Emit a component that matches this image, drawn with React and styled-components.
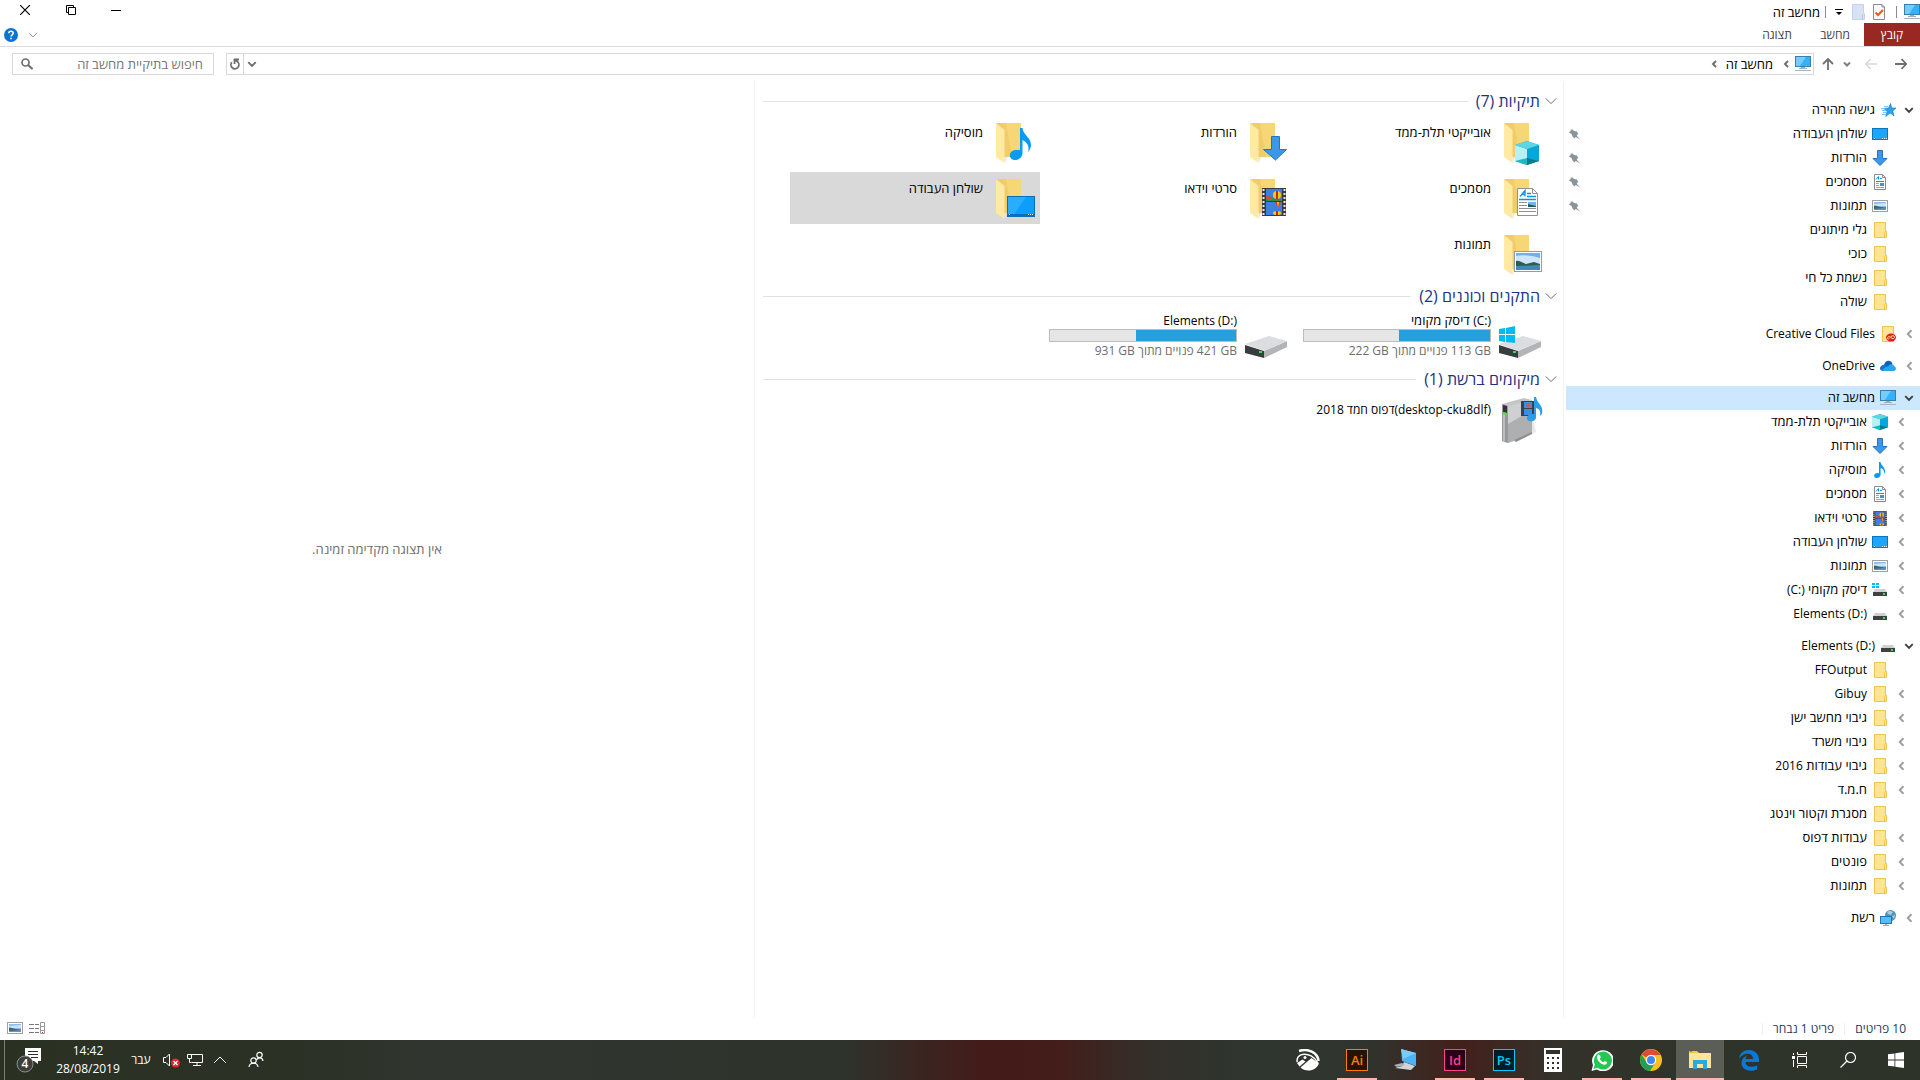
import React from 'react'
import styled, { createGlobalStyle } from 'styled-components'


const GlobalStyle = createGlobalStyle`
  * { box-sizing: border-box; }
  body {
    margin: 0;
    background: #fff;
    color: #000;
    font-family: "Open Sans", "Noto Sans", "DejaVu Sans", sans-serif;
    font-size: 13px;
    line-height: 16px;
  }
  button, input { font: inherit; color: inherit; }
  svg { display: block; flex: none; }
`

const Window = styled.div`
  display: flex;
  flex-direction: column;
  min-height: 100vh;
`

/* latin runs sit one size below the hebrew text */
const Latin = styled.bdi.attrs({ dir: 'ltr' })`
  font-size: 12px;
`

const IconButton = styled.button`
  display: flex;
  align-items: center;
  justify-content: center;
  width: ${p => p.$w || 16}px;
  height: ${p => p.$h || 20}px;
  padding: 0;
  border: 0;
  background: none;
`

/* ---------- title bar ---------- */

const TitleBar = styled.header`
  display: flex;
  justify-content: space-between;
  height: 23px;
`

const QuickTools = styled.div`
  display: flex;
  align-items: center;
  height: 23px;
`

const Divider = styled.span`
  width: 1px;
  height: 12px;
  margin: 0 ${p => p.$gap || 7}px;
  background: ${p => p.$color || '#8c8c8c'};
`

const WindowTitle = styled.h1`
  margin: 0;
  font-size: 13px;
  line-height: 16px;
  font-weight: 400;
`

const WindowButtons = styled.div`
  display: flex;
  direction: ltr;
  padding-left: 2px;
`

const Ribbon = styled.nav`
  display: flex;
  align-items: center;
  height: 24px;
  border-bottom: 1px solid #dadbdc;
`

const Tab = styled.button`
  width: ${p => p.$file ? 56 : 58}px;
  height: 23px;
  padding: 0;
  border: 0;
  background: ${p => p.$file ? '#982821' : 'none'};
  color: ${p => p.$file ? '#fff' : '#444'};
  font-size: 12px;
`

const RibbonEnd = styled.div`
  display: flex;
  direction: ltr;
  align-items: center;
  gap: 6px;
  margin-right: auto;
  padding-left: 3px;
`

/* ---------- address row ---------- */

const AddressRow = styled.div`
  display: flex;
  align-items: center;
  height: 35px;
  padding: 0 8px 1px 12px;
`

const Arrows = styled.div`
  display: flex;
  align-items: center;
`

const AddressBox = styled.div`
  display: flex;
  flex: 1;
  align-items: center;
  height: 22px;
  border: 1px solid #d9d9d9;
  padding-right: 2px;
`

const Crumb = styled.button`
  padding: 0 4px;
  border: 0;
  background: none;
`

const AddressTools = styled.div`
  display: flex;
  direction: ltr;
  align-items: center;
  height: 20px;
  margin-right: auto;
`

const RefreshButton = styled(IconButton)`
  border-right: 1px solid #d9d9d9;
`

const SearchBox = styled.label`
  display: flex;
  align-items: center;
  width: 202px;
  height: 22px;
  margin-right: 12px;
  padding: 0 10px 0 8px;
  border: 1px solid #d9d9d9;
`

const SearchInput = styled.input`
  flex: 1;
  min-width: 0;
  padding: 0;
  border: 0;
  outline: 0;
  background: none;
  &::placeholder { color: #767676; opacity: 1; }
`

/* ---------- panes ---------- */

const Panes = styled.div`
  display: grid;
  flex: 1;
  grid-template-columns: 357px 809fr 754fr;
`

const NavPane = styled.nav`
  padding: 16px 0 16px 2px;
  border-left: 1px solid #f3f3f3;
`

const NavGroup = styled.div`
  margin-bottom: 8px;
`

const NavRow = styled.div`
  display: flex;
  align-items: center;
  height: 24px;
  padding-right: ${p => p.$top ? 3 : 11}px;
  padding-left: 3px;
  background: ${p => p.$selected ? '#cce8ff' : 'none'};
`

const NavLink = styled.a`
  display: flex;
  flex: 1;
  align-items: center;
  gap: 5px;
  margin-right: 5px;
  color: #000;
  text-decoration: none;
`

const NavName = styled.span`
  padding-bottom: 2px;
`

const ChevronSlot = styled.span`
  width: 16px;
`

const FilesPane = styled.main`
  padding: 3px 4px 16px 8px;
  border-left: 1px solid #f3f3f3;
`

const GroupHeader = styled.h2`
  display: flex;
  align-items: center;
  gap: 4px;
  height: 24px;
  margin: 4px 0 3px;
  padding-right: 1px;
  color: #1e3287;
  font-size: 16px;
  line-height: 20px;
  font-weight: 400;
  white-space: nowrap;
  &::after {
    content: '';
    flex: 1;
    height: 1px;
    margin-right: 4px;
    background: #e2e2e2;
  }
`

const TileGrid = styled.div`
  display: grid;
  grid-template-columns: repeat(auto-fill, 250px);
  gap: 4px;
  padding-right: 11px;
`

const Tile = styled.button`
  display: flex;
  gap: 5px;
  height: 52px;
  padding: 2px 4px;
  border: 0;
  background: ${p => p.$selected ? '#d9d9d9' : 'none'};
  text-align: right;
`

const TileName = styled.span`
  padding-top: 6px;
  font-size: ${p => p.$small ? 12 : 13}px;
`

const DriveInfo = styled.span`
  width: 188px;
`

const DriveName = styled.span`
  display: block;
  height: 16px;
  line-height: 14px;
  direction: ltr;
  text-align: right;
`

const DriveBar = styled.span`
  display: block;
  height: 13px;
  border: 1px solid #bcbcbc;
  background: #e6e6e6;
`

const DriveFill = styled.span`
  display: block;
  height: 100%;
  background: #26a0da;
`

const DriveSpace = styled.span`
  display: block;
  font-size: 12px;
  line-height: 18px;
  color: #6d6d6d;
`

const PreviewPane = styled.aside`
  display: flex;
  align-items: center;
  justify-content: center;
  padding-bottom: 2px;
  color: #6d6d6d;
`

/* ---------- status bar and task bar ---------- */

const StatusBar = styled.footer`
  display: flex;
  align-items: center;
  height: 22px;
  padding: 0 14px 0 8px;
  color: #1e395b;
  font-size: 12px;
`

const ViewButtons = styled.div`
  display: flex;
  direction: ltr;
  gap: 6px;
  margin-right: auto;
  padding-bottom: 2px;
`

const TaskBar = styled.footer`
  display: flex;
  justify-content: space-between;
  height: 40px;
  background: linear-gradient(90deg, #2a3022 0%, #2b3124 15%, #30352f 22%, #2e332c 44%, #3a2520 48%, #431c1a 51%, #431d1a 55%, #33302a 60%, #2f352f 65%, #30342e 71%, #43201b 76%, #33322b 81%, #2f342b 88%, #2e332a 100%);
  color: #fff;
  font-size: 12px;
`

const Apps = styled.div`
  display: flex;
  gap: 1px;
`

const SystemApps = styled.div`
  display: flex;
  margin-left: 2px;
`

const App48 = styled.button`
  display: flex;
  align-items: center;
  justify-content: center;
  width: 48px;
  height: 40px;
  padding: 0;
  border: 0;
  background: ${p => p.$active ? '#5b5e57' : 'none'};
  background-image: ${p => p.$open ? 'linear-gradient(#fcb6aa, #fcb6aa)' : 'none'};
  background-repeat: no-repeat;
  background-position: center bottom;
  background-size: ${p => p.$active ? 48 : 40}px 2px;
`

const AdobeTile = styled.span`
  display: flex;
  align-items: center;
  justify-content: center;
  width: 22px;
  height: 22px;
  border: 1px solid ${p => p.$color};
  background: ${p => p.$bg};
  color: ${p => p.$color};
  font-size: 13px;
  font-weight: 600;
  line-height: 20px;
`

const Tray = styled.div`
  display: flex;
  direction: ltr;
  align-items: center;
  padding-left: 4px;
`

const Clock = styled.time`
  width: 72px;
  line-height: 18px;
  text-align: center;
`

const Lang = styled.button`
  width: 34px;
  padding: 0;
  border: 0;
  background: none;
  text-align: center;
`

const NoticeButton = styled(IconButton)`
  border-left: 1px solid #7a7d76;
`

/* ---------- icons ---------- */

function Chevron({ dir = 'left', color = '#a0a0a0', size = 8, weight = 2 }) {
  const d = {
    left: 'M6 1 L3 4 L6 7',
    down: 'M1 2.5 L4 5.5 L7 2.5',
    up: 'M1 5.5 L4 2.5 L7 5.5',
  }[dir]
  return (
    <svg width={size} height={size} viewBox="0 0 8 8" fill="none" stroke={color} strokeWidth={weight * 8 / size}>
      <path d={d} />
    </svg>
  )
}

function Monitor() {
  return (
    <svg width="16" height="16" viewBox="0 0 16 16">
      <rect x="0.5" y="0.5" width="15" height="10" fill="#35b1fb" stroke="#3b7ea8" />
      <path d="M1 1H11L5 10H1Z" fill="#74ccff" />
      <path d="M6 11h4v1H6zM4 12h8v1H4z" fill="#9bb0bd" />
      <path d="M0 14h16v1H0z" fill="#a9b3bb" />
    </svg>
  )
}

function SmallFolder() {
  return (
    <svg width="16" height="16" viewBox="0 0 16 16">
      <path d="M2.5 0.5H13.5V9.5H14.5V15.5H2.5Z" fill="#ffe594" stroke="#ecc54c" />
      <path d="M12.5 15.5V10.5L13.5 9.5" fill="none" stroke="#ecc54c" />
    </svg>
  )
}

function Star() {
  return (
    <svg width="16" height="16" viewBox="0 0 16 16">
      <path d="M10.500 1.500L11.800 6L16 6L12.800 9L14 14L10.200 11L5.800 14.500L7.200 9.500L4 6.400L8.500 6Z" fill="#29a3f0" stroke="#1279c4" strokeWidth=".6" />
      <path d="M4 4.500h4M1 6.500h5M2 8.500h4M3 10.500h4M2 12.500h4" stroke="#5cb9f2" strokeWidth=".8" />
    </svg>
  )
}

function SmallDesktop() {
  return (
    <svg width="16" height="16" viewBox="0 0 16 16">
      <rect x="0.5" y="2.5" width="15" height="11" fill="#1ea5fc" stroke="#0b74bd" />
      <path d="M2 12h1v1H2zM10 12h1v1h-1zM12 12h1v1h-1zM14 12h1v1h-1z" fill="#fff" />
    </svg>
  )
}

function SmallDownload() {
  return (
    <svg width="16" height="16" viewBox="0 0 16 16">
      <path d="M5.5 0.5H10.5V8.5H15L8 15.5L1 8.5H5.5Z" fill="#3b98e8" stroke="#2475c0" />
    </svg>
  )
}

function SmallDocument() {
  return (
    <svg width="16" height="16" viewBox="0 0 16 16">
      <path d="M2.5 0.5H10.5L13.5 3.5V15.5H2.5Z" fill="#fff" stroke="#8b8b8b" />
      <path d="M10.5 0.5V3.5H13.5" fill="none" stroke="#8b8b8b" />
      <path d="M4 5.500L6.500 2.500V5.500M8 4.500H10M4 7.500H12" stroke="#1b8fd8" fill="none" />
      <path d="M4 9.500H7M4 11.500H7M4 13.500H12" stroke="#a0a0a0" />
      <path d="M8 9h4v3H8z" fill="#4a93b5" />
    </svg>
  )
}

function SmallPicture({ size = 16 }) {
  return (
    <svg width={size} height={size} viewBox="0 0 16 16">
      <rect x="0.5" y="2.5" width="15" height="11" fill="#fff" stroke="#a0a0a0" />
      <path d="M2 4H14V12H2Z" fill="#8dbdf3" />
      <path d="M2 6L14 5V8H2Z" fill="#cfe3f7" />
      <path d="M2 7.500C5 7.500 7 9 9 9L14 9.500V11H2Z" fill="#3c6a6c" />
      <path d="M2 11L14 10V12H2Z" fill="#5d98bd" />
    </svg>
  )
}

function CloudFiles() {
  return (
    <svg width="16" height="16" viewBox="0 0 16 16">
      <path d="M2.500 0.500H13.500V15.500H2.500Z" fill="#ffe594" stroke="#ecc54c" />
      <ellipse cx="11" cy="11.500" rx="5" ry="4" fill="#e2231a" />
      <path d="M7.500 12.500C7.500 10 10 10 11 11.500S14 13 14.500 11.500S12.500 9 11 10.500S8.500 14 7.500 12.500Z" fill="none" stroke="#ffd9a0" />
    </svg>
  )
}

function OneDrive() {
  return (
    <svg width="16" height="16" viewBox="0 0 16 16">
      <path d="M4 7C5 2 11 1 12.500 6L8 10L1 12C-1 10 1 7 4 7Z" fill="#0a63b8" />
      <path d="M3 7C6 6 7 8 10 10L3 13C0 13 -1 9 3 7Z" fill="#1277cf" />
      <path d="M3 13C3 10 6 9 8 8.500C10 5 14 6 14 8C17 9 16 13 14 13Z" fill="#28a8ea" />
    </svg>
  )
}

function Cube({ size = 16 }) {
  return (
    <svg width={size} height={size} viewBox="0 0 24 24">
      <path d="M12 0L24 4V20L12 24L0 20V4Z" fill="#0fa8c4" />
      <path d="M0 4L12 8V20L0 20Z" fill="#b8f1f4" />
      <path d="M12 8L24 4V20L12 17Z" fill="#06a7dc" />
      <path d="M12 0L24 4L12 8L0 4Z" fill="#5ed6e2" />
      <path d="M0 20L12 17V24Z" fill="#1bb9c6" />
      <path d="M12 17L24 20L12 24Z" fill="#087b8d" />
    </svg>
  )
}

function Note({ size = 16 }) {
  return (
    <svg width={size} height={size} viewBox="0 0 16 16">
      <path d="M7 0H8.500C9 4 13.500 5 13 10L12 12C12.500 8.500 11 7 8.600 6V12.500C8.600 15 6.500 16 4.500 16C1 16 1.500 11 5.500 11L7 11.200Z" fill="#089bf4" />
    </svg>
  )
}

function Film({ size = 16 }) {
  return (
    <svg width={size} height={size} viewBox="0 0 24 28" preserveAspectRatio="none">
      <path d="M0 0H24V28H0Z" fill="#3b3b3b" />
      <path d="M1.500 1V28M22.500 1V28" stroke="#e8e8e8" strokeWidth="2" strokeDasharray="2 2" />
      <path d="M4 1H20V13H4ZM4 14H20V27H4Z" fill="#3f7fdf" />
      <path d="M4 9Q8 7 12 11H20V13H4Z" fill="#2f9140" />
      <path d="M4 8L9 9L11 12L5 12Z" fill="#e5404a" />
      <ellipse cx="15" cy="7" rx="4" ry="4" fill="#f7c51e" />
      <path d="M14 3h2v8h-2z" fill="#c62828" />
      <path d="M13 14H19L16 20Z" fill="#d23b2a" />
      <path d="M15 14H17L16 20Z" fill="#f7c51e" />
      <ellipse cx="15" cy="25" rx="4" ry="2" fill="#f7c51e" />
      <path d="M14 23h2v4h-2z" fill="#c62828" />
    </svg>
  )
}

function SmallDrive({ system }) {
  return (
    <svg width="16" height="16" viewBox="0 0 16 16">
      {system && <path d="M0 1h3v2H0zM4 1h3v2H4zM0 4h3v2H0zM4 4h3v2H4z" fill="#00bcf2" />}
      <path d="M3 7H13L15 10H1Z" fill="#cfd1d4" />
      <path d="M1 10H15V14H1Z" fill="#3f4245" />
      <path d="M11 11h2v2h-2z" fill="#3ddc4a" />
    </svg>
  )
}

function NetworkGlobe() {
  return (
    <svg width="16" height="16" viewBox="0 0 16 16">
      <circle cx="10.500" cy="5.500" r="5.500" fill="#4f93b5" />
      <path d="M7 2Q10 0 13 2L11 5L8 4ZM12 6L15 5L14 9Z" fill="#a5cfe0" />
      <rect x="0.500" y="6.500" width="11" height="7" fill="#53bdfc" stroke="#2277ae" />
      <path d="M5 14h2v1h2v1H3v-1h2z" fill="#9cabb5" />
    </svg>
  )
}

function Pin() {
  return (
    <svg width="11" height="11" viewBox="0 0 11 11">
      <path d="M3 0L5 2L8 2.500L9 4.500L7.800 6.800L11 10.500L6.800 8L5.500 9.500L3.500 7.500L2.500 5L0 3.500Z" fill="#8a949b" />
    </svg>
  )
}

function FolderShape() {
  return (
    <>
      <path d="M8 5H33V39H16Z" fill="#f0cd6a" />
      <path d="M18 5H33V39H24Z" fill="#fadb7b" opacity=".7" />
      <path d="M8 5L16.500 12V45L8 39Z" fill="#ffe9a3" />
      <path d="M16.500 39H19L17 45Z" fill="#e5e5e5" />
    </>
  )
}

function BigFolder({ kind }) {
  return (
    <svg width="48" height="48" viewBox="0 0 48 48">
      <FolderShape />
      {kind === 'cube' && <g transform="translate(19 23)"><Cube size={24} /></g>}
      {kind === 'download' && (
        <path d="M29.500 18.500H37.500V31.500H44.500L33.500 42L21.500 31.500H29.500Z" fill="#3b98e8" stroke="#2475c0" />
      )}
      {kind === 'music' && (
        <path d="M32 10H34.500C35 17 43 19 43 27C43 30 41 33 40 34C42 27 38 24 34.500 22V35C34.500 39 31 42 27 42C20 42 20 32 28 32H32Z" fill="#089bf4" />
      )}
      {kind === 'document' && (
        <g fill="none">
          <path d="M21.500 14.500H36.500L41.500 19.500V41.500H21.500Z" fill="#fff" stroke="#909090" />
          <path d="M36.500 14.500V19.500H41.500" stroke="#909090" />
          <path d="M24 22.500L29 16.500V22.500M25 20.500H29M31 19.500H35M31 22.500H40M23 25.500H40" stroke="#1490d8" strokeWidth="1.300" />
          <path d="M23 28.500H31M23 31.500H31M23 34.500H40M23 37.500H40" stroke="#909090" />
          <path d="M32 28h8v5h-8z" fill="#71b7e8" />
          <path d="M32 30l8 2v1h-8z" fill="#225c5f" />
        </g>
      )}
      {kind === 'video' && (
        <svg x="20" y="14" width="24" height="28"><Film size="100%" /></svg>
      )}
      {kind === 'desktop' && (
        <g>
          <rect x="19.500" y="22.500" width="27" height="20" fill="#0d9dfb" stroke="#0870b8" />
          <path d="M20 23H38L25 42H20Z" fill="#2badff" />
          <path d="M20 40h26v2H20z" fill="#0870b8" />
          <path d="M21 40h1v1h-1zM40 40h1v1h-1zM42 40h1v1h-1zM44 40h1v1h-1z" fill="#fff" />
        </g>
      )}
      {kind === 'picture' && (
        <g>
          <rect x="18.500" y="21.500" width="27" height="20" fill="#fff" stroke="#9a9a9a" />
          <path d="M20 23h24v17H20z" fill="#6fb0f2" />
          <path d="M20 26Q28 24 44 28V34H20Z" fill="#cfe6fa" />
          <path d="M20 31C24 30 26 33 30 34L38 32L44 34V36H20Z" fill="#2e5d4c" />
          <path d="M20 36L44 35V40H20Z" fill="#3f88b8" />
        </g>
      )}
    </svg>
  )
}

function BigDrive({ system }) {
  return (
    <svg width="48" height="48" viewBox="0 0 48 48">
      <path d="M3 32L22 38V45L3 40Z" fill="#393c3e" />
      <path d="M22 38L45 28V34L22 45Z" fill="#b3b4b8" />
      <path d="M3 31L27 23L45 28L22 38Z" fill="#dcdde0" />
      <path d="M17 38h3v2h-3z" fill="#37e04a" />
      {system && <path d="M3 16L9 15V21H3ZM10 15L19 13V21H10ZM3 22H9V29L3 28ZM10 22H19V30L10 29Z" fill="#00bcf2" />}
    </svg>
  )
}

function MediaServer() {
  return (
    <svg width="48" height="48" viewBox="0 0 48 48">
      <path d="M36 20L40 36L18 46H10Z" fill="#e8e8e8" />
      <path d="M6 8L28 2L36 4V37L12 47L6 45Z" fill="#c4c5c6" />
      <path d="M12 10L36 4V37L12 47Z" fill="#cfd0d1" />
      <path d="M12 28L36 14V37L12 47Z" fill="#aeafb0" />
      <path d="M6 8L12 10V47L6 45Z" fill="#97999b" />
      <path d="M8 10V45" stroke="#e2e2e2" />
      <path d="M7 9L11 10V17L7 16Z" fill="#333" />
      <path d="M7 16L11 17V19L7 18Z" fill="#58df2c" />
      <path d="M18 44L36 36V38L20 46Z" fill="#8d8e8f" />
      <path d="M25 5H38V20H25Z" fill="#39424b" />
      <path d="M28 6H36V12H28ZM28 13H36V19H28Z" fill="#3e8de0" />
      <path d="M29 10L33 7L35 11Z" fill="#e05236" />
      <path d="M38 1H40C41 8 48 9 46 18L44 20C45 14 43 13 40 12V21C40 25 36 26 33 25C29 23 31 18 36 18L38 18Z" fill="#2b9eea" />
    </svg>
  )
}

const smallIcons = {
  star: <Star />,
  desktop: <SmallDesktop />,
  download: <SmallDownload />,
  document: <SmallDocument />,
  picture: <SmallPicture />,
  folder: <SmallFolder />,
  cloud: <CloudFiles />,
  onedrive: <OneDrive />,
  pc: <Monitor />,
  cube: <Cube />,
  music: <Note />,
  video: <svg width="16" height="16"><svg x="1" y="1" width="14" height="15"><Film size="100%" /></svg></svg>,
  drive: <SmallDrive />,
  system: <SmallDrive system />,
  network: <NetworkGlobe />,
}

/* ---------- data ---------- */

const nav = [
  [
    { icon: 'star', name: 'גישה מהירה', top: true, open: true },
    { icon: 'desktop', name: 'שולחן העבודה', pin: true },
    { icon: 'download', name: 'הורדות', pin: true },
    { icon: 'document', name: 'מסמכים', pin: true },
    { icon: 'picture', name: 'תמונות', pin: true },
    { icon: 'folder', name: 'גלי מיתוגים' },
    { icon: 'folder', name: 'כוכי' },
    { icon: 'folder', name: 'נשמת כל חי' },
    { icon: 'folder', name: 'שולה' },
  ],
  [{ icon: 'cloud', name: <Latin>Creative Cloud Files</Latin>, top: true, more: true }],
  [{ icon: 'onedrive', name: <Latin>OneDrive</Latin>, top: true, more: true }],
  [
    { icon: 'pc', name: 'מחשב זה', top: true, open: true, selected: true },
    { icon: 'cube', name: 'אובייקטי תלת-ממד', more: true },
    { icon: 'download', name: 'הורדות', more: true },
    { icon: 'music', name: 'מוסיקה', more: true },
    { icon: 'document', name: 'מסמכים', more: true },
    { icon: 'video', name: 'סרטי וידאו', more: true },
    { icon: 'desktop', name: 'שולחן העבודה', more: true },
    { icon: 'picture', name: 'תמונות', more: true },
    { icon: 'system', name: <>דיסק מקומי <Latin>(C:)</Latin></>, more: true },
    { icon: 'drive', name: <Latin>Elements (D:)</Latin>, more: true },
  ],
  [
    { icon: 'drive', name: <Latin>Elements (D:)</Latin>, top: true, open: true },
    { icon: 'folder', name: <Latin>FFOutput</Latin> },
    { icon: 'folder', name: <Latin>Gibuy</Latin>, more: true },
    { icon: 'folder', name: 'גיבוי מחשב ישן', more: true },
    { icon: 'folder', name: 'גיבוי משרד', more: true },
    { icon: 'folder', name: <>גיבוי עבודות <Latin>2016</Latin></>, more: true },
    { icon: 'folder', name: 'ח.מ.ד', more: true },
    { icon: 'folder', name: 'מסגרת וקטור וינטג' },
    { icon: 'folder', name: 'עבודות דפוס', more: true },
    { icon: 'folder', name: 'פונטים', more: true },
    { icon: 'folder', name: 'תמונות', more: true },
  ],
  [{ icon: 'network', name: 'רשת', top: true, more: true }],
]

const folders = [
  { kind: 'cube', name: 'אובייקטי תלת-ממד' },
  { kind: 'download', name: 'הורדות' },
  { kind: 'music', name: 'מוסיקה' },
  { kind: 'document', name: 'מסמכים' },
  { kind: 'video', name: 'סרטי וידאו' },
  { kind: 'desktop', name: 'שולחן העבודה', selected: true },
  { kind: 'picture', name: 'תמונות' },
]

const drives = [
  { id: 'c', name: <>דיסק מקומי <Latin>(C:)</Latin></>, free: '113 GB', total: '222 GB', used: 49, system: true },
  { id: 'd', name: <Latin>Elements (D:)</Latin>, free: '421 GB', total: '931 GB', used: 54 },
]

/* ---------- parts ---------- */

function NavItem({ icon, name, top, open, more, pin, selected }) {
  return (
    <NavRow $top={top} $selected={selected}>
      {open || more ? (
        <IconButton aria-label={open ? 'כיווץ' : 'הרחבה'}>
          {open ? <Chevron dir="down" color="#404040" size={10} /> : <Chevron size={10} />}
        </IconButton>
      ) : <ChevronSlot />}
      <NavLink href="#">{smallIcons[icon]}<NavName>{name}</NavName></NavLink>
      {pin && <Pin />}
    </NavRow>
  )
}

function Group({ title, children }) {
  return (
    <section>
      <GroupHeader><Chevron dir="down" size={14} color="#6d6d6d" weight={1} />{title}</GroupHeader>
      <TileGrid>{children}</TileGrid>
    </section>
  )
}

function Drive({ name, free, total, used, system }) {
  return (
    <Tile>
      <BigDrive system={system} />
      <DriveInfo>
        <DriveName>{name}</DriveName>
        <DriveBar><DriveFill style={{ width: used + '%' }} /></DriveBar>
        <DriveSpace><Latin>{free}</Latin> פנויים מתוך <Latin>{total}</Latin></DriveSpace>
      </DriveInfo>
    </Tile>
  )
}

function Header() {
  return (
    <>
      <TitleBar>
        <QuickTools>
          <Monitor />
          <Divider />
          <IconButton $w={20} aria-label="מאפיינים">
            <svg width="16" height="18" viewBox="0 0 16 18">
              <path d="M2.500 1.500H11L13.500 4V16.500H2.500Z" fill="#fafafa" stroke="#8b8b8b" />
              <path d="M11 1.500V4H13.500" fill="none" stroke="#8b8b8b" />
              <path d="M4.500 9.500L7 12L12 7" fill="none" stroke="#f0591e" strokeWidth="2" />
            </svg>
          </IconButton>
          <IconButton $w={22} aria-label="תיקיה חדשה">
            <svg width="16" height="16" viewBox="0 0 16 16">
              <path d="M2.500 0.500H13.500V9.500H14.500V15.500H2.500Z" fill="#d7e3f5" stroke="#c5d3ec" />
              <path d="M12.500 15.500V10.500" stroke="#b3c4e3" />
            </svg>
          </IconButton>
          <IconButton $w={16} aria-label="התאמה אישית">
            <svg width="8" height="8" viewBox="0 0 8 8"><path d="M0 1h8v1H0zM1 4h6L4 7z" fill="#000" /></svg>
          </IconButton>
          <Divider $gap={5} />
          <WindowTitle>מחשב זה</WindowTitle>
        </QuickTools>
        <WindowButtons>
          <IconButton $w={46} aria-label="סגירה">
            <svg width="10" height="10" viewBox="0 0 10 10"><path d="M0 0L10 10M10 0L0 10" stroke="#000" strokeWidth="1.200" /></svg>
          </IconButton>
          <IconButton $w={46} aria-label="שחזור">
            <svg width="10" height="10" viewBox="0 0 10 10"><path d="M2.500 2.500H9.500V9.500H2.500ZM2.500 7.500H0.500V0.500H7.500V2.500" fill="none" stroke="#000" /></svg>
          </IconButton>
          <IconButton $w={44} aria-label="מזעור">
            <svg width="10" height="10" viewBox="0 0 10 10"><path d="M0 5.500H10" stroke="#000" /></svg>
          </IconButton>
        </WindowButtons>
      </TitleBar>
      <Ribbon>
        <Tab $file>קובץ</Tab>
        <Tab>מחשב</Tab>
        <Tab>תצוגה</Tab>
        <RibbonEnd>
          <IconButton aria-label="עזרה">
            <svg width="16" height="16" viewBox="0 0 16 16">
              <circle cx="8" cy="8" r="7" fill="#0a74d0" />
              <path d="M5.800 6.200C5.800 3.600 10.200 3.600 10.200 6.200C10.200 7.800 8 7.800 8 9.600M8 10.800V12.200" fill="none" stroke="#fff" strokeWidth="1.500" />
            </svg>
          </IconButton>
          <IconButton aria-label="הרחבת רצועת הכלים"><Chevron dir="down" size={10} weight={1} color="#8c8c8c" /></IconButton>
        </RibbonEnd>
      </Ribbon>
      <AddressRow>
        <Arrows>
          <IconButton $w={22} aria-label="הקודם">
            <svg width="12" height="12" viewBox="0 0 12 12" fill="none" stroke="#6f6f6f" strokeWidth="1.800"><path d="M0 6H11M6.500 1L11.200 6L6.500 11" /></svg>
          </IconButton>
          <IconButton $w={38} aria-label="הבא">
            <svg width="12" height="12" viewBox="0 0 12 12" fill="none" stroke="#d8d8d8" strokeWidth="1.500"><path d="M12 6H1M5.500 1L0.800 6L5.500 11" /></svg>
          </IconButton>
          <IconButton $w={10} aria-label="מיקומים אחרונים"><Chevron dir="down" color="#808080" size={8} /></IconButton>
          <IconButton $w={28} aria-label="למעלה">
            <svg width="12" height="12" viewBox="0 0 12 12" fill="none" stroke="#6f6f6f" strokeWidth="1.800"><path d="M6 12V1M1 6L6 1L11 6" /></svg>
          </IconButton>
        </Arrows>
        <AddressBox>
          <Monitor />
          <IconButton $w={18} aria-label="תיקיות"><Chevron color="#6f6f6f" /></IconButton>
          <Crumb>מחשב זה</Crumb>
          <IconButton $w={16} aria-label="תיקיות משנה"><Chevron color="#6f6f6f" /></IconButton>
          <AddressTools>
            <RefreshButton $w={17} aria-label="רענון">
              <svg width="12" height="12" viewBox="0 0 12 12" fill="none" stroke="#6f6f6f" strokeWidth="1.800"><path d="M2.800 4.200A4 4 0 1 0 8.800 4L6 2M10 1.500H5.500V6" /></svg>
            </RefreshButton>
            <IconButton $w={15} aria-label="מיקומים קודמים"><Chevron dir="down" color="#6f6f6f" size={10} /></IconButton>
          </AddressTools>
        </AddressBox>
        <SearchBox>
          <SearchInput type="search" aria-label="חיפוש" placeholder="חיפוש בתיקיית מחשב זה" />
          <svg width="12" height="12" viewBox="0 0 12 12" fill="none" stroke="#6f6f6f"><circle cx="4.500" cy="4.500" r="3.500" strokeWidth="1.700" /><path d="M7 7L11.500 11" strokeWidth="2" /></svg>
        </SearchBox>
      </AddressRow>
    </>
  )
}

function Bottom() {
  return (
    <>
      <StatusBar>
        <span>10 פריטים</span>
        <Divider $gap={10} $color="#eee" />
        <span>פריט 1 נבחר</span>
        <Divider $gap={10} $color="#eee" />
        <ViewButtons>
          <IconButton $w={14} $h={16} aria-label="סמלים גדולים"><SmallPicture /></IconButton>
          <IconButton $w={18} $h={16} aria-label="פרטים">
            <svg width="16" height="12" viewBox="0 0 16 12" fill="none">
              <path d="M0 2.500H5M6 2.500H10M0 6.500H5M6 6.500H10M0 10.500H5M6 10.500H10" stroke="#777" />
              <path d="M11.500 0.500H15.500V11.500H11.500ZM11.500 4.500H15.500M11.500 8.500H15.500" stroke="#999" />
              <path d="M13 10h1v1h-1z" fill="#d02020" />
            </svg>
          </IconButton>
        </ViewButtons>
      </StatusBar>
      <TaskBar>
        <Apps>
          <SystemApps>
            <App48 aria-label="התחל">
              <svg width="16" height="16" viewBox="0 0 16 16"><path d="M0 2.300L6.500 1.400V7.600H0ZM7.300 1.200L16 0V7.600H7.300ZM0 8.400H6.500V14.600L0 13.700ZM7.300 8.400H16V16L7.300 14.800Z" fill="#fff" /></svg>
            </App48>
            <App48 aria-label="חיפוש">
              <svg width="16" height="16" viewBox="0 0 16 16" fill="none" stroke="#fff" strokeWidth="1.200"><circle cx="10.500" cy="5.500" r="5" /><path d="M7 9L0.500 15.500" /></svg>
            </App48>
            <App48 aria-label="תצוגת משימות">
              <svg width="16" height="16" viewBox="0 0 16 16" fill="none" stroke="#fff"><path d="M5.500 4.500H14.500V11.500H5.500ZM5.500 0V2.500H14.500V0M5.500 16V13.500H14.500V16M1.500 1V3M1.500 8V15" /><path d="M0 4h3v3H0z" fill="#fff" stroke="none" /></svg>
            </App48>
          </SystemApps>
          <App48 aria-label="Edge">
            <svg width="22" height="22" viewBox="0 0 22 22"><path d="M1 10C2 -2 20 -2 21 10V13H7.500C8 18 14 19 19 16.500V20.500C11 24 3 20.500 3.500 13.500C4 9.500 6 8 9 6.500C8 8 7.500 9 7.500 10H15C15 5 11 4 7 5C4 6 2 8 1 10Z" fill="#0a78d7" /></svg>
          </App48>
          <App48 $open $active aria-label="סייר הקבצים">
            <svg width="22" height="20" viewBox="0 0 22 20"><path d="M0 1H8L10 3H22V18H0Z" fill="#f5c542" /><path d="M0 3H22V18H0Z" fill="#ffe49a" /><path d="M1 1h2v1H1z" fill="#2aa5e0" /><path d="M4 19V10H18V19H14V14H8V19Z" fill="#2aa9e0" /></svg>
          </App48>
          <App48 $open aria-label="Chrome">
            <svg width="22" height="22" viewBox="0 0 22 22">
              <circle cx="11" cy="11" r="11" fill="#fbc116" />
              <path d="M11 11L1.500 5.500A11 11 0 0 1 20.500 6H11Z" fill="#e04a3a" />
              <path d="M1.500 5.500A11 11 0 0 0 10 22L15.300 13.500H6.700Z" fill="#239e55" />
              <circle cx="11" cy="11" r="5.200" fill="#fff" /><circle cx="11" cy="11" r="4" fill="#4286f5" />
            </svg>
          </App48>
          <App48 $open aria-label="WhatsApp">
            <svg width="22" height="22" viewBox="0 0 22 22">
              <path d="M0.500 22L2 16A11 10.500 0 1 1 6 20.500Z" fill="#fff" />
              <path d="M2.500 20L3.800 15.500A9 9 0 1 1 6.500 18.800Z" fill="#25c653" />
              <path d="M7.500 5.500L9 6L9.800 8.500L8.800 9.800C9.500 11.500 11 12.700 12.500 13.200L13.700 12L16 13C16.300 14.500 15 15.800 13.500 15.800C10 15.500 6.500 12 6 8.800C6 7 6.500 6 7.500 5.500Z" fill="#fff" />
            </svg>
          </App48>
          <App48 aria-label="מחשבון">
            <svg width="18" height="24" viewBox="0 0 18 24"><path d="M0 0H18V24H0Z" fill="#fff" /><path d="M2 2h14v4H2zM3 9h2v2H3zM8 9h2v2H8zM13 9h2v2h-2zM3 14h2v2H3zM8 14h2v2H8zM13 14h2v2h-2zM3 19h2v2H3zM8 19h2v2H8zM13 19h2v2h-2z" fill="#30332c" /></svg>
          </App48>
          <App48 $open><AdobeTile $color="#00c8ff" $bg="#001d26">Ps</AdobeTile></App48>
          <App48 $open><AdobeTile $color="#ff3f93" $bg="#2b0016">Id</AdobeTile></App48>
          <App48 aria-label="חיבור מרוחק">
            <svg width="24" height="22" viewBox="0 0 24 22"><path d="M7 0L22 4V17L8 12Z" fill="#4cb4f6" /><path d="M7 0L22 4L9 10Z" fill="#7bcbfb" /><path d="M10 13L21 17L17 21L1 19L8 17Z" fill="#cfd5d9" /><path d="M0 16L8 14L11 16L3 18Z" fill="#aab3b9" /></svg>
          </App48>
          <App48 $open><AdobeTile $color="#ff7c00" $bg="#261300">Ai</AdobeTile></App48>
          <App48 aria-label="גלריה">
            <svg width="24" height="22" viewBox="0 0 24 22">
              <path d="M3 2C13 -1 22 4 22.500 12" fill="none" stroke="#fff" strokeWidth="2.500" />
              <path d="M1.200 13C0.500 9 3 6 6 5.500C12 4 19 8 22 14" fill="none" stroke="#fff" strokeWidth="1.500" />
              <circle cx="9" cy="8.500" r="1.500" fill="#fff" />
              <path d="M1 14L6.500 10.500L9.500 12.500L3.500 17.500Z" fill="#fff" />
              <path d="M4.500 18.500L15.500 9L23 14.500C21 19 17 21.500 12.500 21.500C9 21.500 6.500 20.500 4.500 18.500Z" fill="#fff" />
            </svg>
          </App48>
        </Apps>
        <Tray>
          <NoticeButton $w={48} $h={40} aria-label="התראות">
            <svg width="26" height="26" viewBox="0 0 26 26">
              <path d="M9 1H25V14H22V17L18 14H9Z" fill="#fff" />
              <path d="M12 4.500H22M12 7.500H22M15 10.500H22" stroke="#2a3022" />
              <circle cx="9" cy="17" r="8" fill="#3b3f39" stroke="#8c8f88" />
              <text x="9" y="21" textAnchor="middle" fontSize="12" fontWeight="600" fill="#fff">4</text>
            </svg>
          </NoticeButton>
          <Clock dateTime="2019-08-28T14:42">14:42<br />28/08/2019</Clock>
          <Lang>עבר</Lang>
          <IconButton $w={28} $h={40} aria-label="עוצמת קול">
            <svg width="18" height="16" viewBox="0 0 18 16">
              <path d="M0.500 5.500H3L6.500 2V14L3 10.500H0.500Z" fill="none" stroke="#fff" />
              <circle cx="12.500" cy="11" r="4.500" fill="#e02630" /><path d="M10.500 9L14.500 13M14.500 9L10.500 13" stroke="#fff" strokeWidth="1.300" />
            </svg>
          </IconButton>
          <IconButton $w={18} $h={40} aria-label="רשת">
            <svg width="16" height="16" viewBox="0 0 16 16" fill="none" stroke="#fff"><path d="M4 2.500H15.500V10.500H4.500M10 10.500V13.500M6 13.500H14M0.500 2.500H4.500V6.500H0.500ZM2.500 6.500V10.500H4.500" /></svg>
          </IconButton>
          <IconButton $w={32} $h={40} aria-label="סמלים מוסתרים"><Chevron dir="up" size={16} color="#fff" weight={1} /></IconButton>
          <IconButton $w={40} $h={40} aria-label="אנשים">
            <svg width="16" height="18" viewBox="0 0 16 18" fill="none" stroke="#fff" strokeWidth="1.200"><circle cx="11.500" cy="4" r="2.700" /><circle cx="5.500" cy="9.500" r="2.700" /><path d="M1 16C1.500 11 9.500 11 10 16M8.500 9C10 6 14.500 6 15 10" /></svg>
          </IconButton>
        </Tray>
      </TaskBar>
    </>
  )
}

export default function App() {
  return (
    <Window dir="rtl" lang="he">
      <GlobalStyle />
      <Header />
      <Panes>
        <NavPane>
          {nav.map((rows, i) => (
            <NavGroup key={i}>
              {rows.map((row, j) => <NavItem key={j} {...row} />)}
            </NavGroup>
          ))}
        </NavPane>
        <FilesPane>
          <Group title="תיקיות (7)">
            {folders.map(f => (
              <Tile key={f.kind} $selected={f.selected}>
                <BigFolder kind={f.kind} />
                <TileName>{f.name}</TileName>
              </Tile>
            ))}
          </Group>
          <Group title="התקנים וכוננים (2)">
            {drives.map(d => <Drive key={d.id} {...d} />)}
          </Group>
          <Group title="מיקומים ברשת (1)">
            <Tile>
              <MediaServer />
              <TileName $small><Latin>(desktop-cku8dlf)</Latin>דפוס חמד 2018</TileName>
            </Tile>
          </Group>
        </FilesPane>
        <PreviewPane>אין תצוגה מקדימה זמינה.</PreviewPane>
      </Panes>
      <Bottom />
    </Window>
  )
}
